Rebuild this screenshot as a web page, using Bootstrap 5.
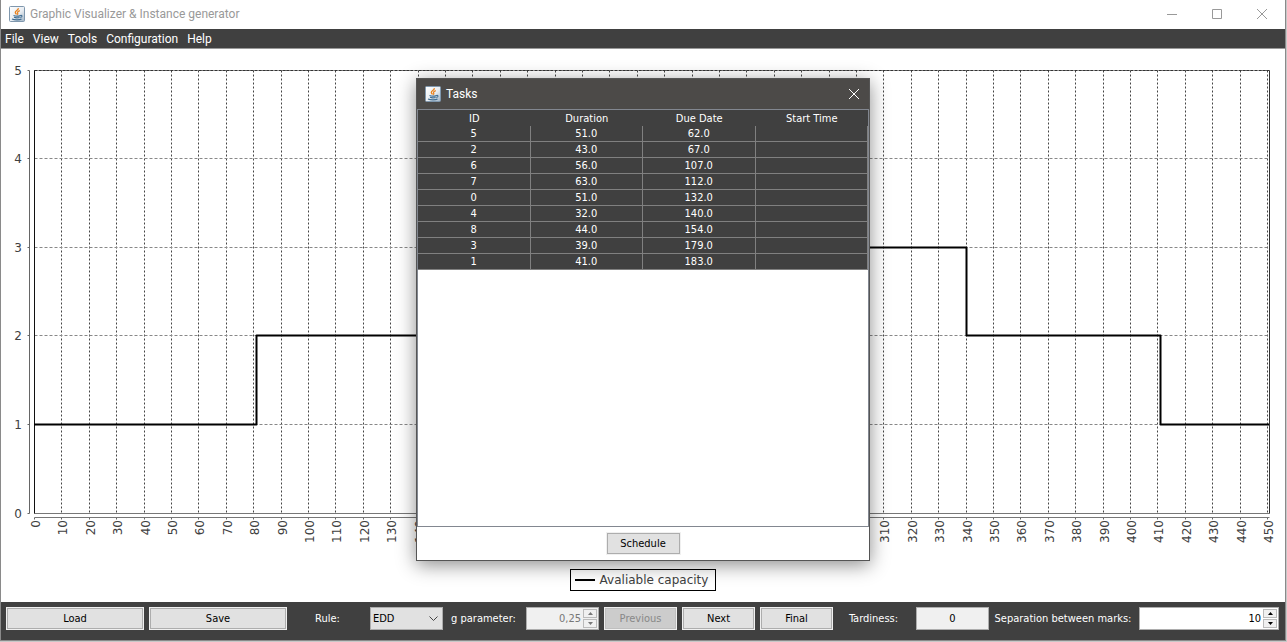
<!DOCTYPE html>
<html lang="en">
<head>
<meta charset="utf-8">
<meta name="viewport" content="width=device-width, initial-scale=1">
<title>Graphic Visualizer &amp; Instance generator</title>
<link href="https://cdn.jsdelivr.net/npm/bootstrap@5.3.0/dist/css/bootstrap.min.css" rel="stylesheet">
<style>
  :root { --dark: #404040; --ui: "DejaVu Sans Condensed", "Noto Sans", sans-serif; --segoe: Roboto, "Open Sans", sans-serif; }
  body { font: 11px/16px var(--ui); color: #000; background: #c8c8c8; }
  .app-window { background: #fff; border: solid #8a8a8a; border-width: 0 1px 1px; margin: 0 1px 1px 0; height: calc(100vh - 1px); min-height: 600px; }
  .title-bar { height: 29px; font: 12px/16px var(--segoe); color: #999; padding: 0 18px 1px 8px; }
  .title-icon { margin-right: 5px; }
  .win-btn { background: none; border: 0; padding: 0; width: 10px; height: 10px; color: #999; line-height: 0; }
  .win-btn svg { display: block; }
  .menu-strip { height: 20px; background: var(--dark); border-bottom: 1px solid #999; padding: 0 4px; gap: 9px; font: 12px/20px var(--segoe); }
  .menu-strip a { color: #fff; text-decoration: none; }
  .plot, .chart-area { min-height: 0; }
  .plot svg { display: block; width: 100%; height: 100%; }
  .plot text { font: 12px "DejaVu Sans", sans-serif; fill: #404040; }
  .plot-legend { border: 1px solid #000; font: 12px/20px "DejaVu Sans", sans-serif; color: #404040; padding: 0 7px 0 4px; gap: 5px; margin-bottom: 11px; }
  .legend-line { width: 20px; height: 2px; background: #000; }
  .tool-strip { background: var(--dark); color: #fff; height: 38px; padding: 5px 6px 10px 5px; }
  .tool-grid { display: grid; gap: 5px; height: 23px; grid-template-columns: 138fr 138fr repeat(9, 73fr) 140fr 140fr; }
  .tool-grid > * { min-width: 0; }
  .push { font: 11px/16px var(--ui); color: #000; background: #e1e1e1; border: 1px solid #adadad; outline: 1px solid #f0f0f0; border-radius: 0; padding: 0; }
  .tool-grid .push { margin: 1px; }
  .push:disabled { color: #888; background: #ccc; border-color: #bfbfbf; }
  .tool-label { white-space: nowrap; text-align: center; line-height: 23px; padding-right: 2px; }
  .pick { font: 11px/16px var(--ui); appearance: none; width: 100%; height: 23px; background: #e1e1e1; border: 1px solid #adadad; border-radius: 0; padding: 0 2px; color: #000; }
  .pick-arrow { right: 5px; top: 9px; pointer-events: none; }
  .box { border: 1px solid #adadad; background: #fff; height: 23px; color: #000; }
  .box input { font: 11px/16px var(--ui); color: inherit; border: 0; background: transparent; padding: 0 2px; min-width: 0; width: 100%; text-align: right; }
  .box.off { background: #f0f0f0; color: #777; }
  input.result { font: 11px/16px var(--ui); text-align: center; background: #f0f0f0; width: 100%; border-radius: 0; }
  .steps { width: 15px; padding: 1px 1px 1px 0; gap: 1px; flex: none; }
  .steps button { flex: 1; border: 1px solid #bbb; background: #f0f0f0; padding: 0; line-height: 0; color: inherit; display: flex; align-items: center; justify-content: center; }
  .task-dialog { position: absolute; top: 78px; left: 50%; transform: translateX(-50%); width: 454px; height: 483px; background: #fff; border: 1px solid #555; box-shadow: 0 4px 18px rgba(0,0,0,.45); }
  .dialog-title { height: 30px; background: #4c4a48; color: #fff; font: 12px/16px var(--segoe); padding: 0 10px 1px 8px; }
  .dialog-title .win-btn { color: #fff; }
  .task-pane { border: 1px solid #828790; }
  .task-table { width: 100%; table-layout: fixed; border-collapse: separate; border-spacing: 0; color: #fff; background: var(--dark); }
  .task-table th, .task-table td { padding: 0; height: 16px; line-height: 15px; font-weight: 400; text-align: center; }
  .task-table td { border: 1px solid #808080; border-width: 0 1px 1px 0; }
  .dialog-actions { height: 33px; }
  .schedule { width: 73px; height: 21px; }
</style>
</head>
<body>
<svg width="0" height="0" class="position-absolute" aria-hidden="true">
  <defs>
    <linearGradient id="jbg" x1="0" y1="0" x2="1" y2="1"><stop offset="0" stop-color="#fff"/><stop offset=".55" stop-color="#e8edf2"/><stop offset="1" stop-color="#9fb2c4"/></linearGradient>
    <symbol id="java" viewBox="0 0 16 16">
      <rect x=".5" y=".5" width="15" height="15" rx="1" fill="url(#jbg)" stroke="#7f97ad"/>
      <path d="M9.300 2.200C9.800 4 6.200 4.800 6.300 6.400c0 .8.800 1.400 1.300 2M10.800 4.600C8.800 5.400 8 6.200 8.700 7.200c.4.600.1 1-.4 1.500" fill="none" stroke="#e8811c" stroke-width="1.300"/>
      <path d="M4.500 9.500c2 .8 5 .7 7 .1M5 11.300c1.600.6 4 .6 5.600.1M3 13c2.500 1.200 8 1.100 9.500 0M11.500 9.500c1.800-.5 2.300 1.400-.2 2" fill="none" stroke="#3f6d92" stroke-width="1.100"/>
    </symbol>
  </defs>
</svg>

<div class="app-window d-flex flex-column position-relative">
  <header class="title-bar d-flex align-items-center">
    <svg width="16" height="16" class="title-icon" aria-hidden="true"><use href="#java"/></svg>
    <span>Graphic Visualizer &amp; Instance generator</span>
    <div class="ms-auto d-flex" style="gap:35px">
      <button class="win-btn" aria-label="Minimize"><svg width="10" height="10"><path d="M0 5.500h10" stroke="currentColor"/></svg></button>
      <button class="win-btn" aria-label="Maximize"><svg width="10" height="10"><path d="M.5.500h9v9h-9z" fill="none" stroke="currentColor"/></svg></button>
      <button class="win-btn" aria-label="Close"><svg width="10" height="10"><path d="M0 0l10 10M10 0L0 10" stroke="currentColor"/></svg></button>
    </div>
  </header>

  <nav class="menu-strip d-flex">
    <a href="#">File</a><a href="#">View</a><a href="#">Tools</a><a href="#">Configuration</a><a href="#">Help</a>
  </nav>

  <main class="chart-area flex-grow-1 d-flex flex-column align-items-center">
    <div class="plot flex-grow-1 w-100"><svg id="chart" role="img" aria-label="Available capacity over time"></svg></div>
    <div class="plot-legend d-flex align-items-center"><span class="legend-line"></span><span>Avaliable capacity</span></div>
  </main>

  <footer class="tool-strip">
    <div class="tool-grid">
      <button class="push">Load</button>
      <button class="push">Save</button>
      <label class="tool-label" for="rule">Rule:</label>
      <div class="position-relative">
        <select id="rule" class="pick"><option>EDD</option></select>
        <svg class="pick-arrow position-absolute" width="9" height="6"><path d="M.5.500l4 4 4-4" fill="none" stroke="#444"/></svg>
      </div>
      <label class="tool-label" for="gparam">g parameter:</label>
      <div class="box off d-flex">
        <input id="gparam" type="text" value="0,25" disabled>
        <div class="steps d-flex flex-column">
          <button disabled aria-label="Increase g"><svg width="5" height="3"><path d="M0 3l2.500-3L5 3z" fill="currentColor"/></svg></button>
          <button disabled aria-label="Decrease g"><svg width="5" height="3"><path d="M0 0l2.500 3L5 0z" fill="currentColor"/></svg></button>
        </div>
      </div>
      <button class="push" disabled>Previous</button>
      <button class="push">Next</button>
      <button class="push">Final</button>
      <label class="tool-label" for="tardiness">Tardiness:</label>
      <input id="tardiness" class="box result" type="text" value="0" readonly>
      <label class="tool-label" for="marks">Separation between marks:</label>
      <div class="box d-flex">
        <input id="marks" type="text" value="10">
        <div class="steps d-flex flex-column">
          <button aria-label="Increase separation"><svg width="5" height="3"><path d="M0 3l2.500-3L5 3z" fill="currentColor"/></svg></button>
          <button aria-label="Decrease separation"><svg width="5" height="3"><path d="M0 0l2.500 3L5 0z" fill="currentColor"/></svg></button>
        </div>
      </div>
    </div>
  </footer>

  <section class="task-dialog d-flex flex-column" role="dialog" aria-labelledby="dlg-title">
    <div class="dialog-title d-flex align-items-center">
      <svg width="16" height="16" class="title-icon" aria-hidden="true"><use href="#java"/></svg>
      <span id="dlg-title">Tasks</span>
      <button class="win-btn ms-auto" aria-label="Close tasks"><svg width="10" height="10"><path d="M0 0l10 10M10 0L0 10" stroke="currentColor"/></svg></button>
    </div>
    <div class="task-pane flex-grow-1">
      <table class="task-table">
        <thead><tr><th>ID</th><th>Duration</th><th>Due Date</th><th>Start Time</th></tr></thead>
        <tbody>
          <tr><td>5</td><td>51.0</td><td>62.0</td><td></td></tr>
          <tr><td>2</td><td>43.0</td><td>67.0</td><td></td></tr>
          <tr><td>6</td><td>56.0</td><td>107.0</td><td></td></tr>
          <tr><td>7</td><td>63.0</td><td>112.0</td><td></td></tr>
          <tr><td>0</td><td>51.0</td><td>132.0</td><td></td></tr>
          <tr><td>4</td><td>32.0</td><td>140.0</td><td></td></tr>
          <tr><td>8</td><td>44.0</td><td>154.0</td><td></td></tr>
          <tr><td>3</td><td>39.0</td><td>179.0</td><td></td></tr>
          <tr><td>1</td><td>41.0</td><td>183.0</td><td></td></tr>
        </tbody>
      </table>
    </div>
    <div class="dialog-actions d-flex justify-content-center align-items-center"><button class="push schedule">Schedule</button></div>
  </section>
</div>

<script src="https://cdn.jsdelivr.net/npm/bootstrap@5.3.0/dist/js/bootstrap.bundle.min.js"></script>
<script>
  // Step chart of machine capacity against time, redrawn to the space available.
  const chart = document.getElementById('chart');
  const capacity = [[0, 1], [81, 2], [170, 3], [340, 2], [411, 1]];
  const maxTime = 450, maxCap = 5;
  function draw() {
    const w = chart.clientWidth, h = chart.clientHeight;
    const left = 33, right = w - 16, top = 21, bottom = h - 56;
    const sx = (right - 2 - left) / maxTime, sy = (bottom - top) / maxCap;
    const X = v => Math.round(left + v * sx), Y = v => Math.floor(bottom - v * sy);
    let out = '';
    const line = (x1, y1, x2, y2, c, extra = '') =>
      out += `<path d="M${x1 + .5} ${y1 + .5}L${x2 + .5} ${y2 + .5}" stroke="${c}" ${extra}/>`;
    for (let v = 0; v <= maxTime; v += 10) {
      line(X(v), top, X(v), bottom, '#444', 'stroke-dasharray="2 2"');
      line(X(v), bottom + 4, X(v), bottom + 6, '#666');
      out += `<text transform="translate(${X(v) + 6} ${bottom + 7}) rotate(-90)" text-anchor="end">${v}</text>`;
    }
    for (let v = 0; v <= maxCap; v++) {
      line(left, Y(v), right, Y(v), '#888', 'stroke-dasharray="3 2"');
      line(left - 7, Y(v), left - 5, Y(v), '#666');
      out += `<text x="${left - 12}" y="${Y(v) + 5}" text-anchor="end">${v}</text>`;
    }
    line(left - 5, top, left - 5, bottom, '#666');
    line(left, bottom + 4, right, bottom + 4, '#777');
    line(left, bottom, right, bottom, '#777');
    line(left, top, right, top, '#333', 'stroke-dasharray="3 1"');
    line(left, top, left, bottom, '#111');
    line(right, top, right, bottom, '#333');
    let d = '';
    capacity.forEach(([t, c], i) => {
      const last = i + 1 === capacity.length;
      const end = last ? right : X(capacity[i + 1][0]) + .5;
      d += i ? `V${Y(c) + .5}H${end}` : `M${X(t)} ${Y(c) + .5}H${end}`;
    });
    out += `<path d="${d}" fill="none" stroke="#000" stroke-width="2" stroke-linejoin="round"/>`;
    chart.innerHTML = out;
  }
  draw();
  addEventListener('resize', draw);
</script>
</body>
</html>
